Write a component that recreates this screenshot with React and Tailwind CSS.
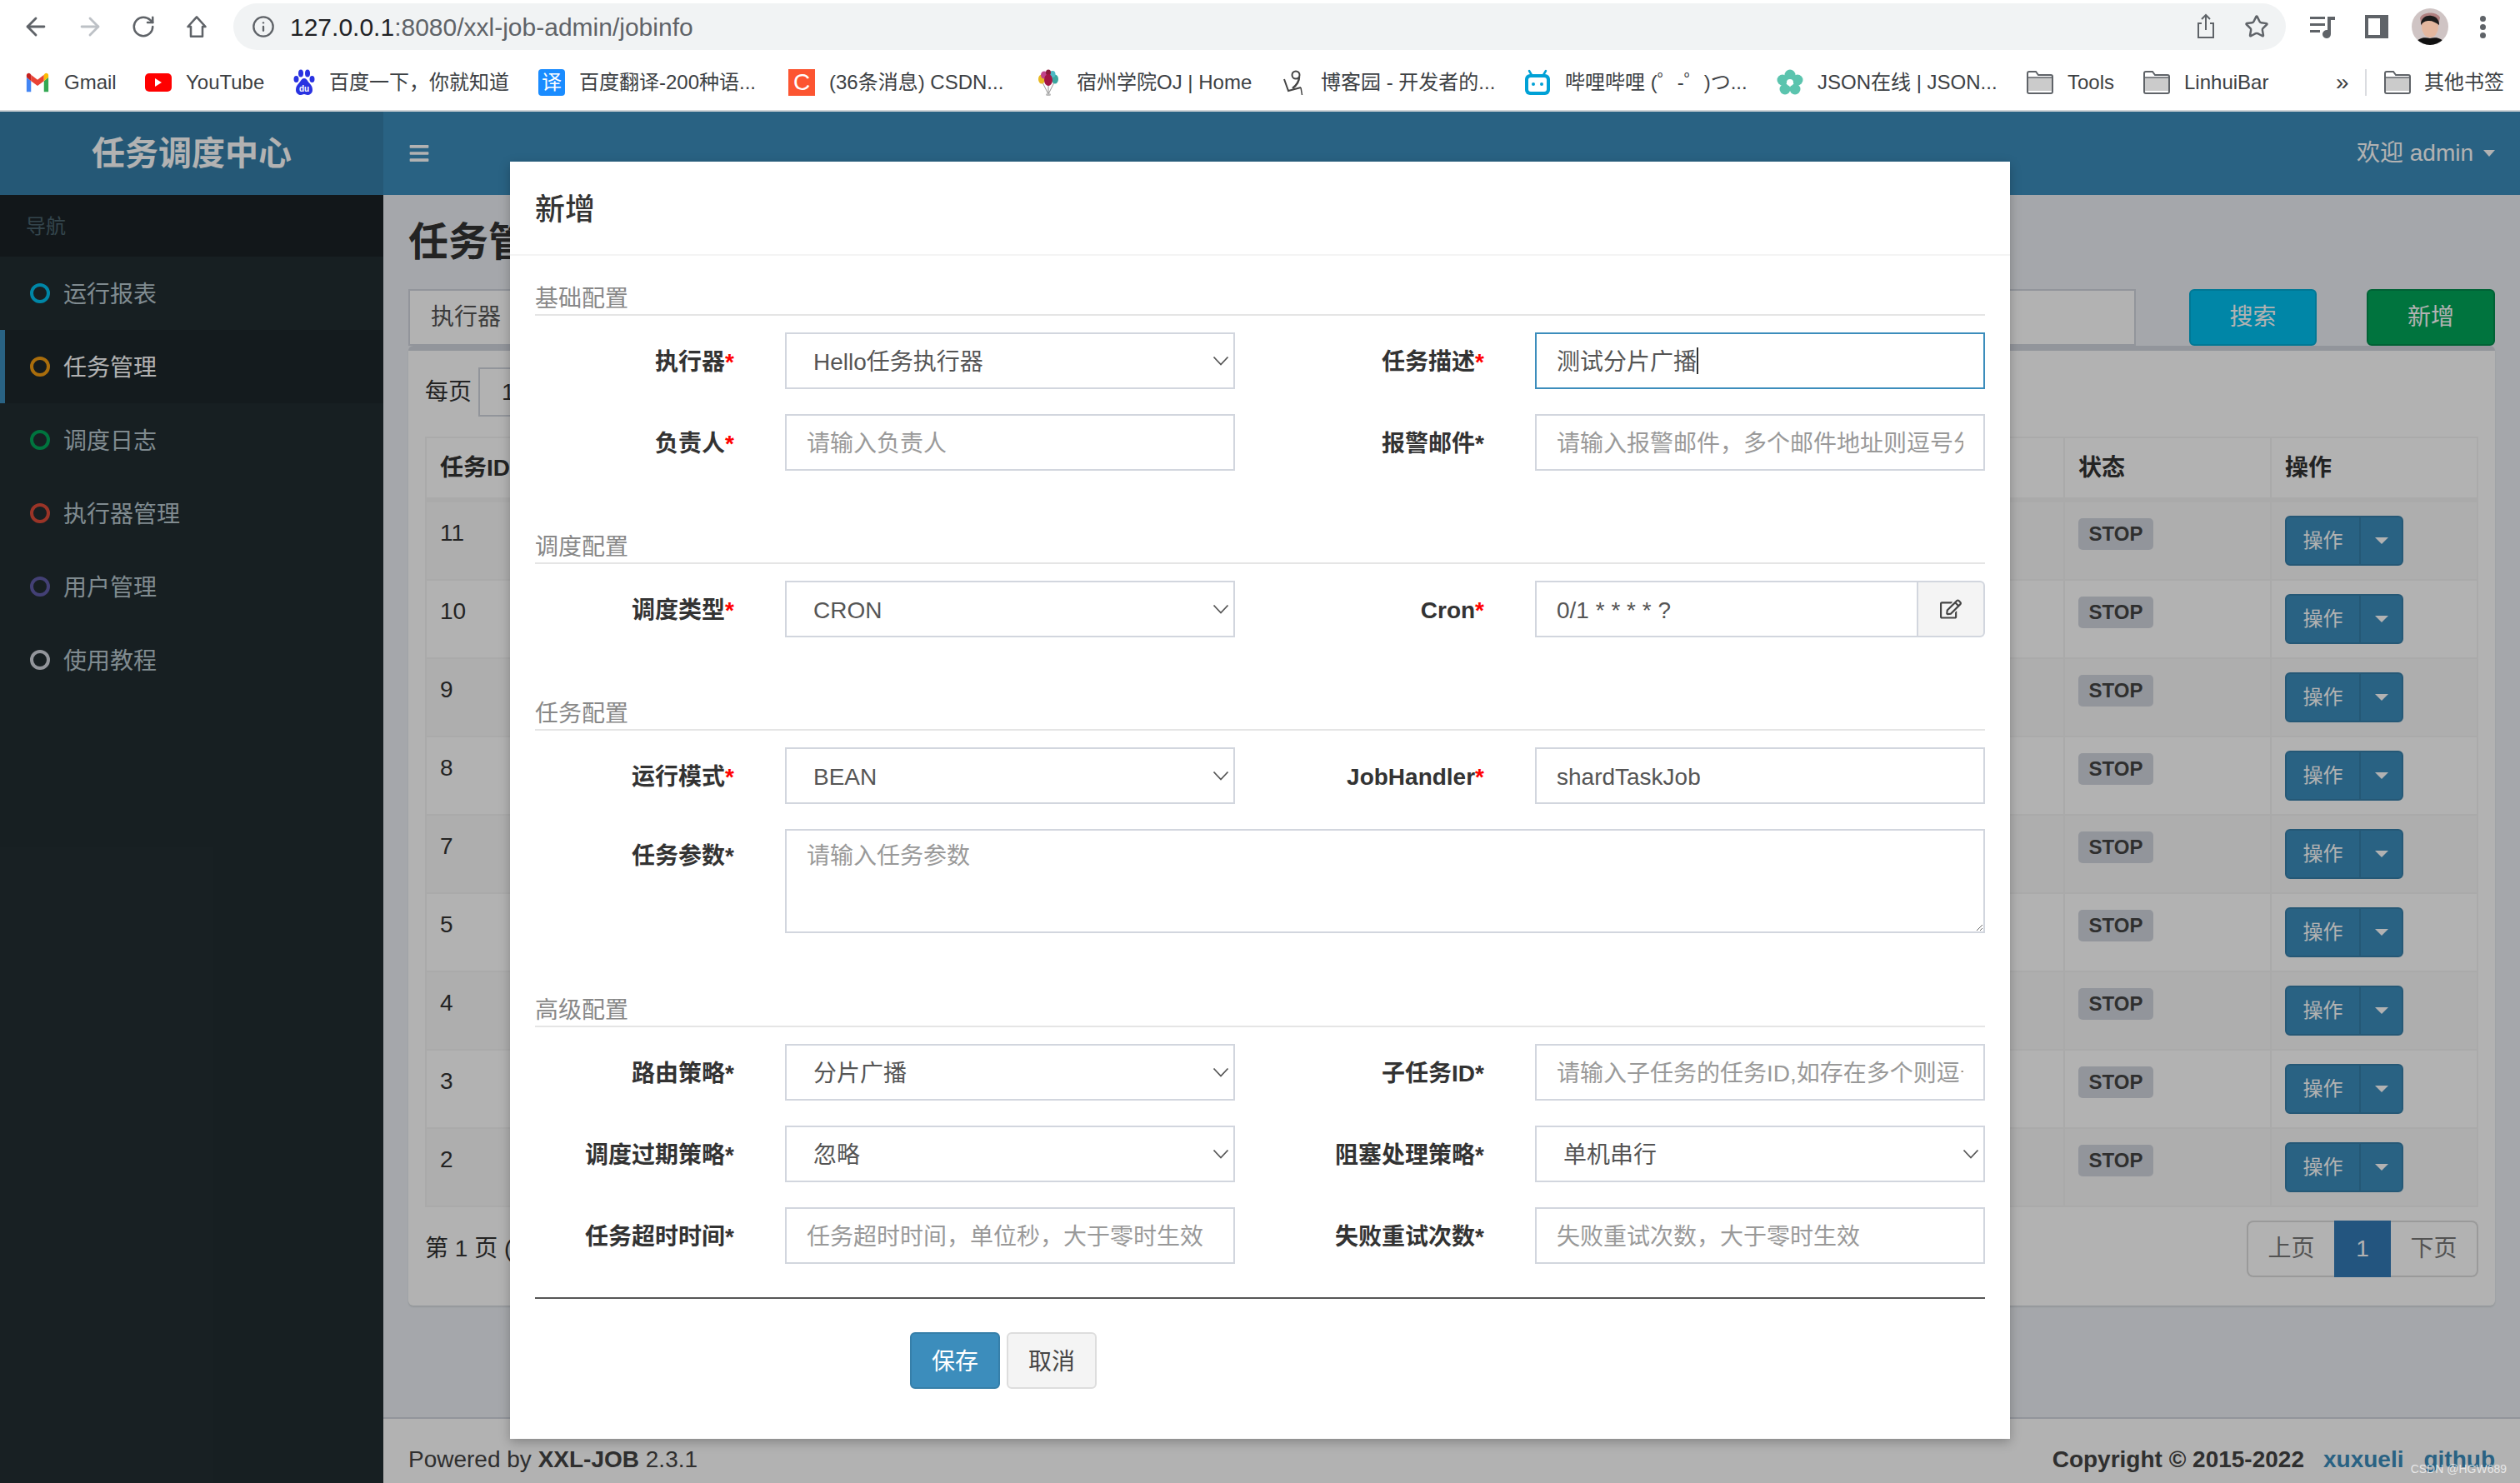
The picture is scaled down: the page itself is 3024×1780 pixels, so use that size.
import { ArrowLeft, ArrowRight, RotateCw, Info, Star } from 'lucide-react';
import { FaBars, FaRegEdit } from 'react-icons/fa';

const Gmail = () => (
  <svg viewBox="0 0 24 24" className="w-[30px] h-[30px]">
    <path fill="#4285F4" d="M1.5 21h4.3V10.5L1.5 7z" />
    <path fill="#34A853" d="M18.2 21h4.3V7l-4.3 3.5z" />
    <path fill="#EA4335" d="M5.8 10.5l6.2 4.7 6.2-4.7V4.6L12 9.3 5.8 4.6z" />
    <path fill="#FBBC04" d="M18.2 4.6v5.9L22.5 7V5.2c0-1.8-2.1-2.8-3.5-1.7z" />
    <path fill="#C5221F" d="M1.5 7l4.3 3.5V4.6L5 3.5C3.600 2.400 1.500 3.400 1.500 5.200z" />
  </svg>
);

const YouTube = () => (
  <div className="w-[32px] h-[22px] rounded-[5px] bg-[#ff0000] flex items-center justify-center">
    <div className="border-y-[5px] border-l-[8px] border-y-transparent border-l-white" />
  </div>
);

const Baidu = () => (
  <svg viewBox="0 0 26 32" className="w-[26px] h-[32px]">
    <g fill="#2932e1">
      <ellipse cx="9" cy="5" rx="3" ry="4.500" />
      <ellipse cx="17" cy="5" rx="3" ry="4.500" />
      <ellipse cx="3.500" cy="12" rx="3" ry="4" />
      <ellipse cx="22.500" cy="12" rx="3" ry="4" />
      <path d="M13 11c-3 0-4 3.500-6.500 6C4 19.500 3 22 3 25c0 4 3.500 6 6 6 2 0 2.500-1 4-1s2 1 4 1c2.500 0 6-2 6-6 0-3-1-5.500-3.500-8C17 14.500 16 11 13 11z" />
    </g>
    <text x="13" y="27" textAnchor="middle" fontSize="10" fontWeight="700" fill="#fff">du</text>
  </svg>
);

const Balloons = () => (
  <svg viewBox="0 0 26 32" className="w-[26px] h-[32px] mr-[4px]">
    <path d="M6 16l7 14M20 16l-7 14M13 18v12" stroke="#777" strokeWidth="0.800" fill="none" />
    <ellipse cx="5" cy="12" rx="4" ry="5.500" fill="#e8b923" />
    <ellipse cx="21" cy="12" rx="4" ry="5.500" fill="#3aa6a0" />
    <ellipse cx="8" cy="7" rx="4" ry="4.500" fill="#c0448a" />
    <ellipse cx="18" cy="6" rx="3.500" ry="4" fill="#4cb8c4" />
    <ellipse cx="13" cy="4" rx="3" ry="3.500" fill="#8b1a3a" />
    <ellipse cx="13" cy="13" rx="5" ry="7" fill="#a31545" />
    <ellipse cx="13" cy="30.500" rx="3" ry="1.500" fill="#bbb" />
  </svg>
);

const Blogs = () => (
  <svg viewBox="0 0 26 32" className="w-[26px] h-[32px] mr-[3px]" fill="none" stroke="#444">
    <circle cx="16" cy="7" r="4.500" strokeWidth="2" />
    <path d="M20 9c0 6-4 11-8 14" strokeWidth="2.500" />
    <path d="M2 12l5 14 15-4" strokeWidth="2" />
    <path d="M22 22l1.500 9" strokeWidth="1.500" />
  </svg>
);

const Bili = () => (
  <svg viewBox="0 0 32 32" className="w-[32px] h-[32px]">
    <path d="M9 7L6 2M23 7l3-5" stroke="#00a1d6" strokeWidth="2.500" strokeLinecap="round" />
    <rect x="1" y="6" width="30" height="25" rx="6" fill="#00a1d6" />
    <rect x="5" y="10" width="22" height="17" rx="3" fill="#fff" />
    <circle cx="11" cy="18" r="2" fill="#00a1d6" />
    <circle cx="21" cy="18" r="2" fill="#00a1d6" />
  </svg>
);

const Flower = () => (
  <svg viewBox="0 0 32 32" className="w-[32px] h-[32px]">
    <g fill="#5bc4ae">
      <circle cx="16" cy="7" r="6.500" />
      <circle cx="7" cy="13" r="6.500" />
      <circle cx="25" cy="13" r="6.500" />
      <circle cx="10" cy="24" r="6.500" />
      <circle cx="22" cy="24" r="6.500" />
    </g>
    <circle cx="16" cy="16" r="4" fill="#fff" />
  </svg>
);

const Folder = () => (
  <svg viewBox="0 0 32 28" className="w-[32px] h-[28px]">
    <path d="M1 3a2 2 0 0 1 2-2h8l3 4h15a2 2 0 0 1 2 2v18a2 2 0 0 1-2 2H3a2 2 0 0 1-2-2z" fill="#fff" stroke="#5f6368" strokeWidth="2" />
    <path d="M2 8h28v16H2z" fill="#cbcbcb" />
    <path d="M1 8h30" stroke="#5f6368" strokeWidth="1.500" />
  </svg>
);

const bookmarks = [
  { w: 144, icon: <Gmail />, label: 'Gmail' },
  { w: 178, icon: <YouTube />, label: 'YouTube' },
  { w: 294, icon: <Baidu />, label: '百度一下，你就知道' },
  {
    w: 300,
    icon: <div className="w-[32px] h-[32px] rounded-[4px] bg-[#1a8cff] text-white text-[24px] leading-[32px] text-center">译</div>,
    label: '百度翻译-200种语...',
  },
  {
    w: 299,
    icon: <div className="w-[32px] h-[32px] bg-[#fc5531] text-white text-[28px] leading-[32px] text-center">C</div>,
    label: '(36条消息) CSDN...',
  },
  { w: 294, icon: <Balloons />, label: '宿州学院OJ | Home' },
  { w: 290, icon: <Blogs />, label: '博客园 - 开发者的...' },
  { w: 303, icon: <Bili />, label: '哔哩哔哩 (゜-゜)つ...' },
  { w: 300, icon: <Flower />, label: 'JSON在线 | JSON...' },
  { w: 140, icon: <Folder />, label: 'Tools' },
  { w: 231, icon: <Folder />, label: 'LinhuiBar' },
];

function BrowserChrome() {
  return (
    <div className="h-[134px] bg-white border-b-2 border-[#d0d4d7] shrink-0">
      <div className="h-[66px] flex items-start pt-1">
        <div className="w-[280px] h-[56px] flex items-center text-[#5f6368]">
          <ArrowLeft className="w-[34px] h-[34px] ml-[26px]" strokeWidth={2} />
          <ArrowRight className="w-[34px] h-[34px] ml-[31px] text-[#bdc1c6]" strokeWidth={2} />
          <RotateCw className="w-[30px] h-[30px] ml-[32px]" strokeWidth={2} />
          <svg viewBox="0 0 24 24" className="w-[28px] h-[28px] ml-[35px]" fill="none" stroke="currentColor" strokeWidth="2.200" strokeLinejoin="round">
            <path d="M12 2L3 12h3v10h12V12h3z" />
          </svg>
        </div>
        <div className="w-[2463px] h-[56px] rounded-full bg-[#f1f3f4] flex items-center pl-[22px] pr-[20px]">
          <Info className="w-[28px] h-[28px] text-[#5f6368]" strokeWidth={2} />
          <div className="ml-[18px] text-[30px] text-[#5f6368]"><span className="text-[#202124]">127.0.0.1</span>:8080/xxl-job-admin/jobinfo</div>
          <div className="ml-auto flex items-center gap-[34px] text-[#5f6368]">
            <svg viewBox="0 0 24 32" className="w-[24px] h-[32px]" fill="none" stroke="currentColor" strokeWidth="2">
              <path d="M7 12H3v17h18V12h-4M12 20V2M7 7l5-5 5 5" />
            </svg>
            <Star className="w-[30px] h-[30px]" strokeWidth={2} />
          </div>
        </div>
        <div className="flex-1 h-[56px] flex items-center text-[#5f6368]">
          <svg viewBox="0 0 32 32" className="w-[32px] h-[32px] ml-[28px]" fill="currentColor">
            <path d="M1 4h18v3H1zM1 12h18v3H1zM1 20h12v3H1z" />
            <path d="M22 4h9v4h-5v17a5 5 0 1 1-4-4.900z" />
          </svg>
          <div className="w-[28px] h-[28px] ml-[35px] border-[4px] border-r-[10px] border-[#5f6368]" />
          <svg viewBox="0 0 44 44" className="w-[44px] h-[44px] ml-[28px] rounded-full">
            <rect width="44" height="44" fill="#cfc4c4" />
            <path d="M10 12c2-8 20-9 24-1l-2 10H12z" fill="#b08080" />
            <ellipse cx="22" cy="22" rx="10" ry="13" fill="#e3b79f" />
            <path d="M11 20c0-10 8-12 13-11 6 1 9 5 9 11-4-3-8-5-12-5s-7 1-10 5z" fill="#1c1c1c" />
            <path d="M4 44c2-8 10-10 18-8 8-2 16 0 18 8z" fill="#111" />
          </svg>
          <div className="ml-[38px] flex flex-col gap-[3px]">
            <div className="w-[7px] h-[7px] rounded-full bg-[#5f6368]" />
            <div className="w-[7px] h-[7px] rounded-full bg-[#5f6368]" />
            <div className="w-[7px] h-[7px] rounded-full bg-[#5f6368]" />
          </div>
        </div>
      </div>
      <div className="h-[66px] flex items-center pl-[30px] text-[24px] text-[#3c4043] whitespace-nowrap">
        {bookmarks.map(b => (
          <div key={b.label} style={{ width: b.w }} className="flex items-center gap-[17px] shrink-0">
            {b.icon}
            <span>{b.label}</span>
          </div>
        ))}
        <span className="text-[28px] w-[35px]">»</span>
        <div className="w-[2px] h-[32px] bg-[#dadce0]" />
        <div className="flex items-center gap-[16px] ml-[21px]">
          <Folder />
          <span>其他书签</span>
        </div>
      </div>
    </div>
  );
}

const menu = [
  ['运行报表', 'border-[#00c0ef]'],
  ['任务管理', 'border-[#f39c12]'],
  ['调度日志', 'border-[#00a65a]'],
  ['执行器管理', 'border-[#dd4b39]'],
  ['用户管理', 'border-[#605ca8]'],
  ['使用教程', 'border-[#d2d6de]'],
];

function Sidebar() {
  return (
    <aside className="w-[460px] bg-[#222d32] shrink-0">
      <div className="h-[74px] bg-[#1a2226] pl-[31px] pt-[2px] flex items-center text-[24px] text-[#4b646f]">导航</div>
      {menu.map(([name, color]) => {
        const active = name === '任务管理';
        return (
          <div key={name} className={`h-[88px] flex items-center gap-[16px] pl-[30px] border-l-[6px] text-[28px] ${active ? 'bg-[#1e282c] border-[#3c8dbc] text-white' : 'border-transparent text-[#b8c7ce]'}`}>
            <div className={`w-[24px] h-[24px] rounded-full border-[4px] ${color}`} />
            <span className="pt-[4px]">{name}</span>
          </div>
        );
      })}
    </aside>
  );
}

const jobs = [11, 10, 9, 8, 7, 5, 4, 3, 2];

function JobTable() {
  return (
    <table className="w-[2464px] table-fixed border-collapse text-[28px] text-[#333]">
      <thead>
        <tr className="h-[75px] font-bold">
          <th className="w-[130px] border-2 border-b-[6px] border-[#f4f4f4] px-4 text-left">任务ID</th>
          <th className="w-[1836px] border-2 border-b-[6px] border-[#f4f4f4]" />
          <th className="w-[248px] border-2 border-b-[6px] border-[#f4f4f4] px-4 text-left">状态</th>
          <th className="border-2 border-b-[6px] border-[#f4f4f4] px-4 text-left">操作</th>
        </tr>
      </thead>
      <tbody>
        {jobs.map((id, i) => (
          <tr key={id} className={`h-[94px] ${i % 2 === 0 ? 'bg-[#f9f9f9]' : 'bg-white'}`}>
            <td className="border-2 border-[#f4f4f4] p-4 align-top">{id}</td>
            <td className="border-2 border-[#f4f4f4]" />
            <td className="border-2 border-[#f4f4f4] p-4 align-top">
              <span className="inline-flex items-center justify-center w-[90px] h-[38px] rounded-[5px] bg-[#d2d6de] text-[#444] text-[24px] font-bold">STOP</span>
            </td>
            <td className="border-2 border-[#f4f4f4] p-4 align-top">
              <div className="w-[142px] h-[60px] flex rounded-[6px] border-2 border-[#367fa9] bg-[#3c8dbc] text-white text-[24px]">
                <div className="w-[89px] flex items-center justify-center border-r-2 border-[#367fa9]">操作</div>
                <div className="flex-1 flex items-center justify-center">
                  <div className="border-x-[8px] border-t-[8px] border-x-transparent border-t-white" />
                </div>
              </div>
            </td>
          </tr>
        ))}
      </tbody>
    </table>
  );
}

function Content() {
  return (
    <div className="flex-1 flex flex-col bg-[#ecf0f5] min-w-0">
      <div className="flex-1 px-[30px]">
        <h1 className="mt-[28px] mb-[27px] text-[48px] leading-[58px] font-bold text-[#333]">任务管理</h1>
        <div className="h-[68px] flex">
          <div className="w-[2073px] border-2 border-[#d2d6de] bg-white flex items-center pl-[25px] text-[28px] text-[#555]">执行器</div>
          <button className="ml-[64px] w-[153px] rounded-[6px] border-2 border-[#00acd6] bg-[#00c0ef] text-white text-[28px]">搜索</button>
          <button className="ml-[60px] w-[154px] rounded-[6px] border-2 border-[#008d4c] bg-[#00a65a] text-white text-[28px]">新增</button>
        </div>
        <div className="border-t-[6px] border-[#d2d6de] rounded-[6px] bg-white p-5 pb-[34px] shadow-[0_2px_2px_rgba(0,0,0,0.1)]">
          <div className="flex items-center h-[59px] mb-[24px] text-[28px] text-[#333]">
            <span>每页</span>
            <div className="ml-[8px] w-[150px] h-full border-2 border-[#d2d6de] pl-[26px] flex items-center">10</div>
          </div>
          <JobTable />
          <div className="mt-[16px] flex items-center justify-between text-[28px] text-[#333]">
            <span>第 1 页 ( 总共 9 条 )</span>
            <div className="h-[68px] flex text-[#777]">
              <div className="w-[105px] flex items-center justify-center border-2 border-r-0 border-[#ddd] rounded-l-[8px]">上页</div>
              <div className="w-[68px] flex items-center justify-center bg-[#337ab7] text-white">1</div>
              <div className="w-[105px] flex items-center justify-center border-2 border-l-0 border-[#ddd] rounded-r-[8px]">下页</div>
            </div>
          </div>
        </div>
      </div>
      <footer className="h-[79px] shrink-0 border-t-2 border-[#d2d6de] bg-white px-[30px] pt-[29px] flex justify-between text-[28px] leading-[40px] text-[#444]">
        <div>Powered by <b>XXL-JOB</b> 2.3.1</div>
        <div className="font-bold flex">
          <span>Copyright © 2015-2022</span>
          <span className="ml-[23px] text-[#3c8dbc]">xuxueli</span>
          <span className="ml-[24px] text-[#3c8dbc]">github</span>
        </div>
      </footer>
    </div>
  );
}

const controlCls = 'w-full h-[68px] border-2 bg-white pt-[4px] text-[28px] text-[#555] outline-none';

function Label({ text, required, className = 'pt-[4px]' }) {
  return (
    <label className={`pr-[61px] text-right text-[28px] font-bold text-[#333] ${className}`}>
      {text}
      <span className={required ? 'text-[#ff0000]' : ''}>*</span>
    </label>
  );
}

function Select({ value }) {
  return (
    <div className="relative">
      <select defaultValue={value} className={`${controlCls} border-[#d2d6de] appearance-none pl-[32px] pr-[40px] rounded-none`}>
        <option>{value}</option>
      </select>
      <svg viewBox="0 0 20 12" className="absolute right-[7px] top-[28px] w-[20px] h-[12px] pointer-events-none" fill="none" stroke="#555" strokeWidth="1.800">
        <path d="M1.500 1.500L10 10.500l8.500-9" />
      </svg>
    </div>
  );
}

function TextInput({ placeholder, value }) {
  return <input readOnly placeholder={placeholder} value={value || ''} className={`${controlCls} border-[#d2d6de] px-[24px] placeholder:text-[#999]`} />;
}

function Heading({ title, className }) {
  return <div className={`border-b-2 border-[#e5e5e5] text-[28px] leading-[36px] text-[#888] ${className}`}>{title}</div>;
}

const rowCls = 'grid grid-cols-[300px_540px_360px_540px] items-center gap-y-[30px] mt-[20px]';

function Modal() {
  return (
    <div className="w-[1800px] bg-white shadow-[0_4px_12px_rgba(0,0,0,0.25)]">
      <div className="h-[113px] border-b-2 border-[#f4f4f4] pl-[30px] pt-[4px] flex items-center text-[36px] font-medium text-[#333]">新增</div>
      <div className="px-[30px] pb-[60px]">
        <Heading title="基础配置" className="mt-[34px]" />
        <div className={rowCls}>
          <Label text="执行器" required />
          <Select value="Hello任务执行器" />
          <Label text="任务描述" required />
          <div className={`${controlCls} border-[#3c8dbc] px-[24px] flex items-center`}>
            <span>测试分片广播</span>
            <span className="w-[2px] h-[32px] bg-[#333] -mt-[4px]" />
          </div>
          <Label text="负责人" required />
          <TextInput placeholder="请输入负责人" />
          <Label text="报警邮件" />
          <TextInput placeholder="请输入报警邮件，多个邮件地址则逗号分隔" />
        </div>

        <Heading title="调度配置" className="mt-[74px]" />
        <div className={rowCls}>
          <Label text="调度类型" required />
          <Select value="CRON" />
          <Label text="Cron" required />
          <div className="flex">
            <input readOnly value="0/1 * * * * ?" className={`${controlCls} border-[#d2d6de] flex-1 min-w-0 px-[24px]`} />
            <div className="w-[80px] h-[68px] shrink-0 flex items-center justify-center border-2 border-l-0 border-[#d2d6de] rounded-r-[6px] bg-[#f4f4f4] text-[#444]">
              <FaRegEdit className="w-[26px] h-[26px]" />
            </div>
          </div>
        </div>

        <Heading title="任务配置" className="mt-[74px]" />
        <div className={rowCls}>
          <Label text="运行模式" required />
          <Select value="BEAN" />
          <Label text="JobHandler" required />
          <TextInput value="shardTaskJob" />
          <Label text="任务参数" className="self-start pt-[12px]" />
          <textarea readOnly placeholder="请输入任务参数" className="col-span-3 h-[125px] w-full border-2 border-[#d2d6de] px-[24px] py-[10px] text-[28px] text-[#555] placeholder:text-[#999] outline-none" />
        </div>

        <Heading title="高级配置" className="mt-[75px]" />
        <div className={rowCls}>
          <Label text="路由策略" />
          <Select value="分片广播" />
          <Label text="子任务ID" />
          <TextInput placeholder="请输入子任务的任务ID,如存在多个则逗号分隔" />
          <Label text="调度过期策略" />
          <Select value="忽略" />
          <Label text="阻塞处理策略" />
          <Select value="单机串行" />
          <Label text="任务超时时间" />
          <TextInput placeholder="任务超时时间，单位秒，大于零时生效" />
          <Label text="失败重试次数" />
          <TextInput placeholder="失败重试次数，大于零时生效" />
        </div>

        <div className="mt-[40px] border-t-2 border-[#555] pt-[40px] pl-[450px] flex gap-[8px] text-[28px]">
          <button className="w-[108px] h-[68px] pt-[3px] rounded-[6px] border-2 border-[#367fa9] bg-[#3c8dbc] text-white">保存</button>
          <button className="w-[108px] h-[68px] pt-[3px] rounded-[6px] border-2 border-[#ddd] bg-[#f4f4f4] text-[#444]">取消</button>
        </div>
      </div>
    </div>
  );
}

export default function App() {
  return (
    <div className="w-[3024px] h-[1780px] overflow-hidden flex flex-col bg-white font-['Liberation_Sans','Noto_Sans_CJK_SC',sans-serif]">
      <BrowserChrome />
      <div className="relative flex-1 flex flex-col min-h-0">
        <header className="h-[100px] shrink-0 flex bg-[#3c8dbc] text-white">
          <div className="w-[460px] bg-[#367fa9] flex items-center justify-center text-[40px] font-bold">任务调度中心</div>
          <div className="pl-[30px] flex items-center">
            <FaBars className="w-[26px] h-[26px]" />
          </div>
          <div className="ml-auto pr-[30px] flex items-center gap-[12px] text-[28px]">
            <span>欢迎 admin</span>
            <div className="border-x-[7px] border-t-[8px] border-x-transparent border-t-white" />
          </div>
        </header>
        <div className="flex-1 flex min-h-0">
          <Sidebar />
          <Content />
        </div>
        <div className="absolute inset-0 bg-black/30 flex justify-center items-start pt-[60px]">
          <Modal />
        </div>
        <div className="absolute right-[16px] bottom-[6px] text-[14px] text-white/70">CSDN @HGW689</div>
      </div>
    </div>
  );
}
